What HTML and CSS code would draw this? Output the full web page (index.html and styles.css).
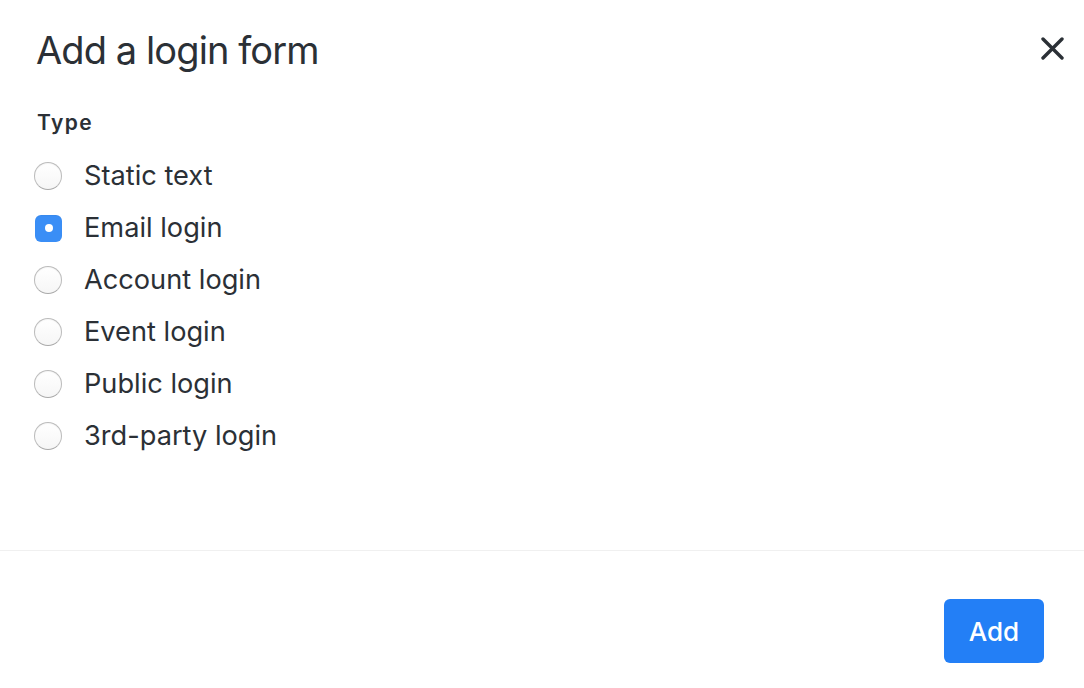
FILE: index.html
```html
<!DOCTYPE html>
<html lang="en">
<head>
<meta charset="utf-8">
<title>Add a login form</title>
<link rel="stylesheet" href="styles.css">
</head>
<body>
<div class="modal">
  <div class="modal-header">
    <h1 class="modal-title">Add a login form</h1>
    <button class="close" aria-label="Close">
      <svg width="23" height="23" viewBox="0 0 23 23"><path d="M2 2 L21 21 M21 2 L2 21" stroke="#2b3036" stroke-width="3.4" stroke-linecap="round"/></svg>
    </button>
  </div>
  <div class="modal-body">
    <div class="label">Type</div>
    <div class="options">
      <label class="option"><span class="radio"></span><span>Static text</span></label>
      <label class="option"><span class="radio checked"></span><span>Email login</span></label>
      <label class="option"><span class="radio"></span><span>Account login</span></label>
      <label class="option"><span class="radio"></span><span>Event login</span></label>
      <label class="option"><span class="radio"></span><span>Public login</span></label>
      <label class="option"><span class="radio"></span><span>3rd-party login</span></label>
    </div>
  </div>
  <div class="modal-footer">
    <button class="btn">Add</button>
  </div>
</div>
</body>
</html>
```
FILE: styles.css
```css
html, body {
  margin: 0;
  padding: 0;
  background: #fff;
}
body {
  font-family: Inter, "Liberation Sans", sans-serif;
  color: #2b3036;
}
.modal {
  width: 1084px;
  height: 688px;
  display: flex;
  flex-direction: column;
}
.modal-header {
  display: flex;
  justify-content: space-between;
  align-items: flex-start;
  padding: 26px 20px 0 36px;
}
.modal-title {
  margin: 0;
  font-size: 38px;
  font-weight: 400;
  line-height: 48px;
  letter-spacing: -0.9px;
}
.close {
  border: 0;
  background: none;
  padding: 0;
  margin-top: 11px;
  width: 23px;
  height: 23px;
  cursor: pointer;
}
.close svg { display: block; }
.modal-body {
  padding: 37px 0 0 34px;
  height: 477px;
  box-sizing: border-box;
  border-bottom: 1px solid #f0f0f0;
}
.label {
  font-size: 21px;
  font-weight: 600;
  line-height: 24px;
  letter-spacing: 1.4px;
  margin-left: 3px;
  margin-bottom: 24px;
}
.options {
  display: flex;
  flex-direction: column;
  gap: 18px;
}
.option {
  display: flex;
  align-items: center;
  gap: 22px;
  font-size: 27.2px;
  line-height: 34px;
  height: 34px;
}
.radio {
  width: 26px;
  height: 26px;
  border-radius: 50%;
  border: 1px solid #bcbcbc;
  border-bottom-color: #a9a9a9;
  background: linear-gradient(#fff, #f6f6f6);
  box-sizing: content-box;
  flex: none;
  box-shadow: inset 0 1px 1px rgba(0,0,0,0.04);
}
.radio.checked {
  width: 27px;
  height: 27px;
  border: 0;
  border-radius: 6px;
  background: #3a8ef6;
  position: relative;
  margin-left: 1px;
}
.radio.checked::after {
  content: "";
  position: absolute;
  width: 8px;
  height: 8px;
  border-radius: 50%;
  background: #fff;
  left: 50%;
  top: 50%;
  transform: translate(-50%, -50%);
}
.modal-footer {
  display: flex;
  justify-content: flex-end;
  padding: 48px 40px 0 0;
}
.btn {
  width: 100px;
  height: 64px;
  border: 0;
  border-radius: 6px;
  background: #237ff6;
  color: #fff;
  font-family: Inter, "Liberation Sans", sans-serif;
  font-size: 26px;
  font-weight: 500;
  cursor: pointer;
}
```
